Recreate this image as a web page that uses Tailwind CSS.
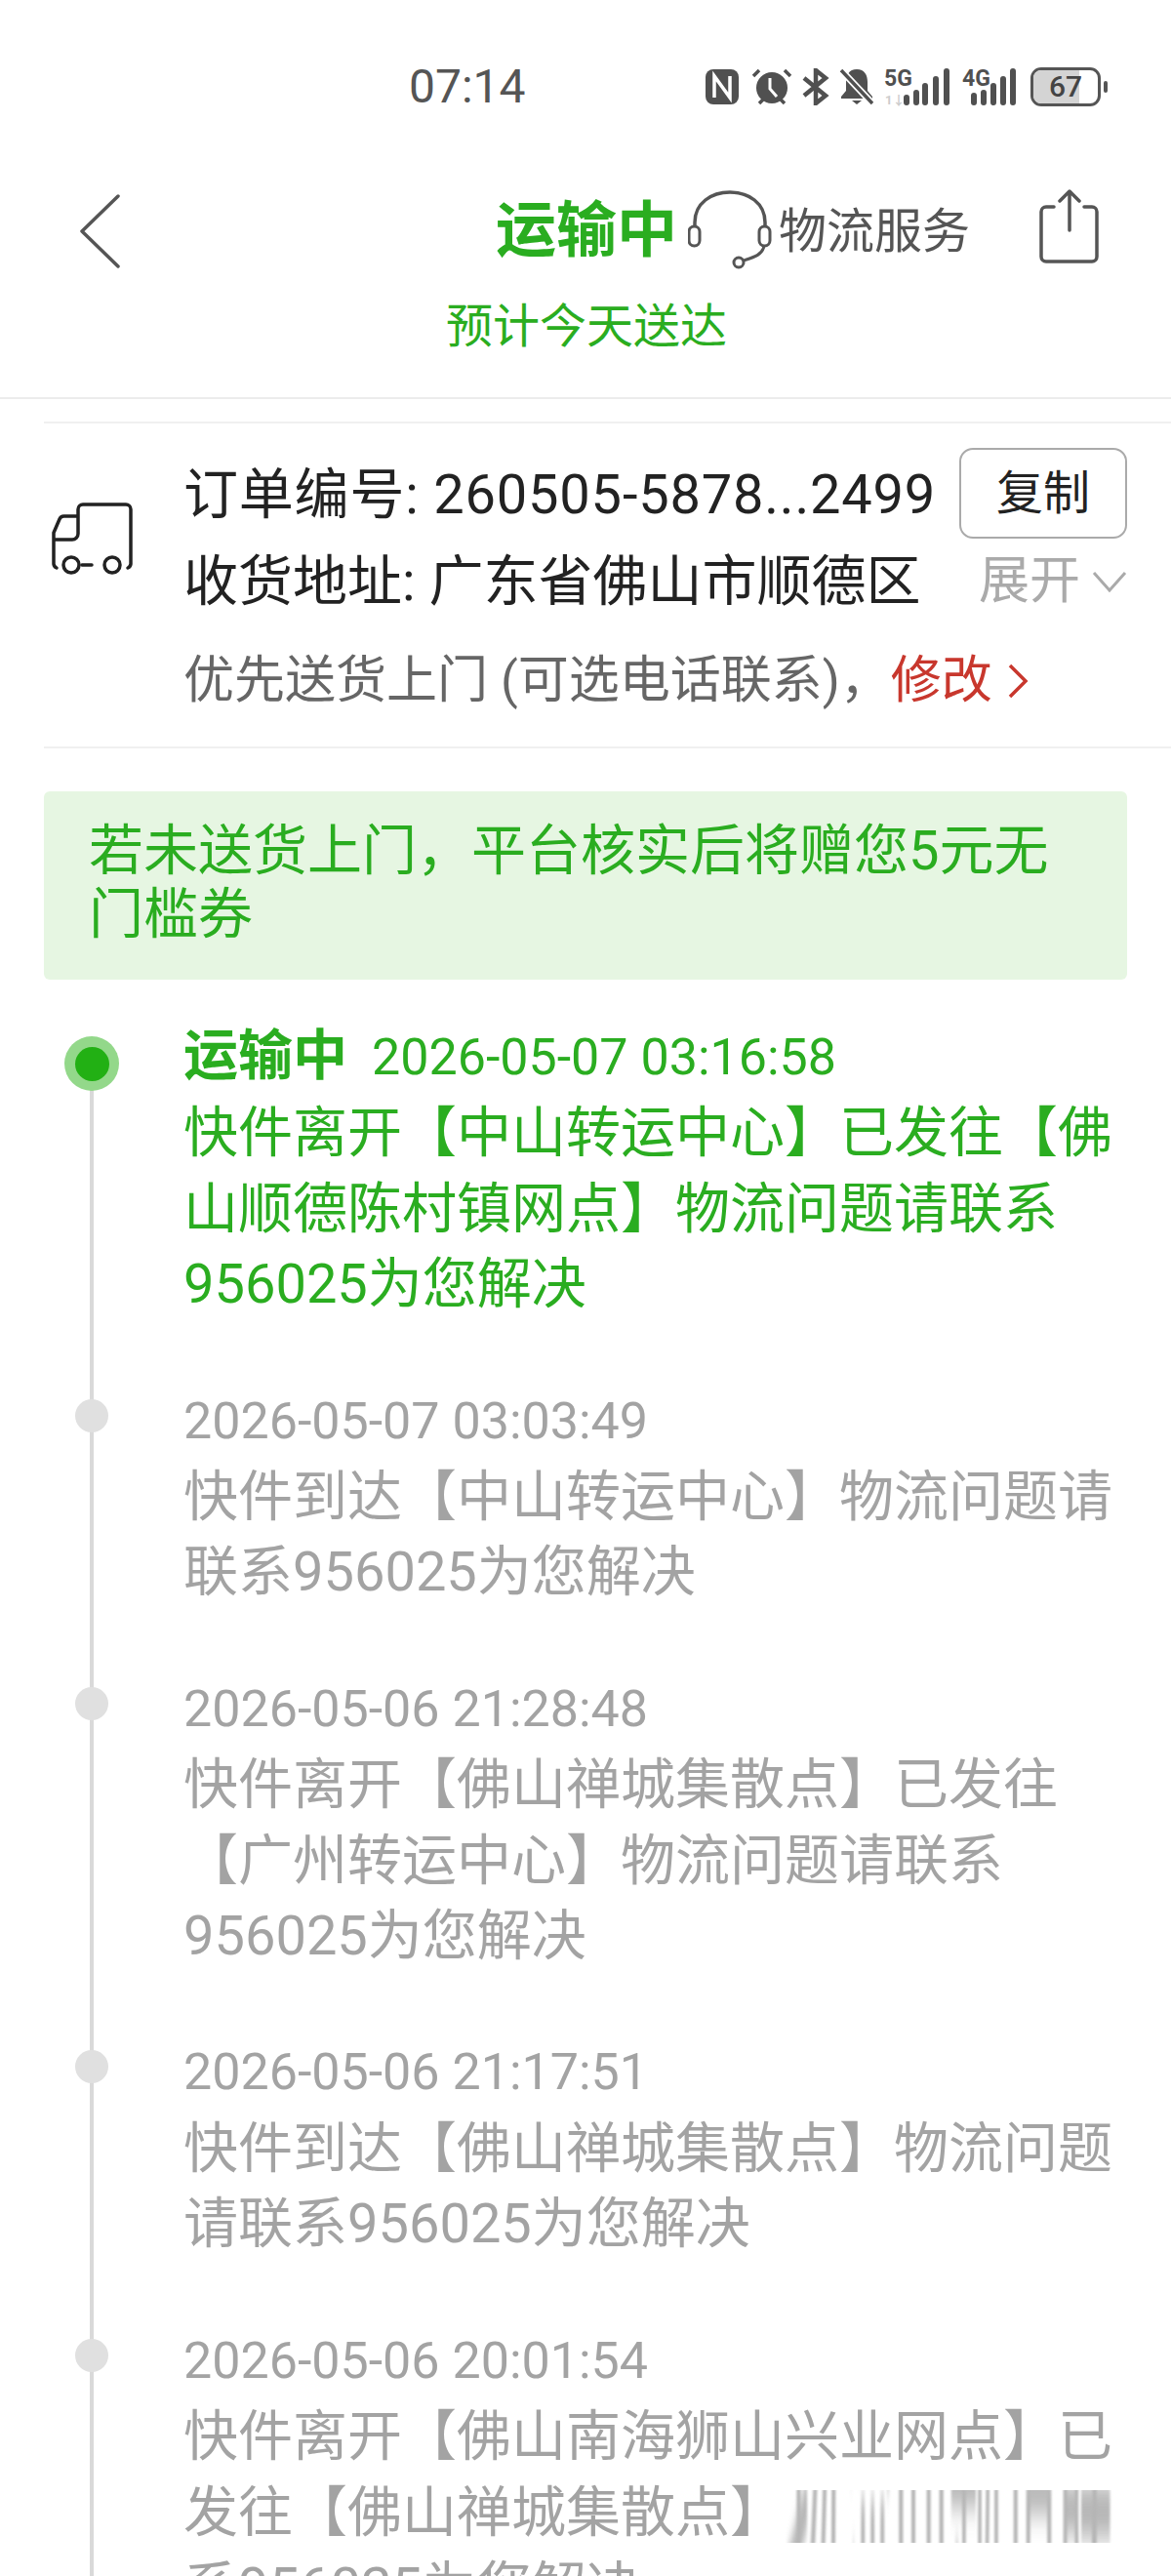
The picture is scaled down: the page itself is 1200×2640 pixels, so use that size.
<!DOCTYPE html>
<html lang="zh-CN">
<head>
  <meta charset="UTF-8" />
  <meta name="viewport" content="width=device-width, initial-scale=1.0" />
  <title>运输中</title>
  <script src="https://cdn.jsdelivr.net/npm/@tailwindcss/browser@4"></script>
</head>
<body class="bg-white font-['Roboto','Noto_Sans_CJK_SC',sans-serif]">
  <div class="w-[1200px] h-[2640px] overflow-hidden">

    <!-- status bar -->
    <div class="h-[178px] flex items-center text-[#555]">
      <span class="ml-[419px] w-[304px] text-[48px] leading-none">07:14</span>
      <svg class="w-[34px] h-[36px] mr-[13px]" viewBox="0 0 34 36"><rect width="34" height="36" rx="8" fill="#505050"/><path d="M9 29V7l16 22V7" fill="none" stroke="#fff" stroke-width="3.5"/></svg>
      <svg class="w-[42px] h-[40px] mr-[10px]" viewBox="0 0 42 40"><circle cx="21" cy="21" r="16" fill="#505050"/><path d="M19 11v11l7 8" fill="none" stroke="#fff" stroke-width="3"/><path d="M2 9l6-6M40 9l-6-6M8 37l4-4M34 37l-4-4" stroke="#505050" stroke-width="3.5"/></svg>
      <svg class="w-[28px] h-[38px] mr-[11px]" viewBox="0 0 28 38"><path d="M2 10l22 18-10 8V2l10 8L2 28" fill="none" stroke="#505050" stroke-width="4.5"/></svg>
      <svg class="w-[34px] h-[38px] mr-[11px]" viewBox="0 0 34 38"><path d="M17 1c8 0 11 6 11 13v9l5 6v2H1v-2l5-6v-9C6 7 9 1 17 1z" fill="#505050"/><path d="M12 33h10l-5 4z" fill="#505050"/><path d="M1 2l32 34" stroke="#fff" stroke-width="7"/><path d="M1 2l32 34" stroke="#505050" stroke-width="3.5"/></svg>
      <svg class="w-[68px] h-[40px] mr-[12px]" viewBox="0 0 68 40"><text x="0" y="19" font-size="23" font-weight="700" fill="#505050">5G</text><text x="1" y="38" font-size="13" font-weight="700" fill="#ccc">1↓</text><path d="M23 36v-5M33 36v-10M42 36V19M53 36V12M64 36V4" stroke="#505050" stroke-width="6" stroke-linecap="round"/></svg>
      <svg class="w-[56px] h-[40px] mr-[14px]" viewBox="0 0 56 40"><text x="0" y="19" font-size="23" font-weight="700" fill="#505050">4G</text><path d="M12 36v-7M22 36V26M32 36V19M42 36V12M52 36V4" stroke="#505050" stroke-width="6" stroke-linecap="round"/></svg>
      <div class="relative w-[72px] h-[40px] rounded-[11px] border-[3px] border-[#555] overflow-hidden flex items-center justify-center">
        <div class="absolute left-0 top-0 bottom-0 w-[47px] bg-[#d4d4d4]"></div>
        <span class="relative text-[30px] leading-none font-medium text-[#444]">67</span>
      </div>
      <div class="w-[4px] h-[12px] ml-[3px] rounded-full bg-[#555]"></div>
    </div>

    <!-- nav -->
    <div class="h-[118px] flex items-center">
      <svg class="ml-[80px] w-[44px] h-[78px]" viewBox="0 0 44 78"><path d="M41 3L4 39l37 36" fill="none" stroke="#555" stroke-width="3.5" stroke-linecap="round" stroke-linejoin="round"/></svg>
      <span class="ml-[384px] w-[198px] text-[62px] leading-none font-bold text-[#2aad20] whitespace-nowrap">运输中</span>
      <svg class="w-[92px] h-[84px] -ml-[1px] -mt-[2px]" viewBox="0 0 92 84"><path d="M7 38V34C7 14 24 3 43 3s36 11 36 31v4" fill="none" stroke="#555" stroke-width="3.5"/><rect x="1" y="38" width="11" height="20" rx="5.5" fill="none" stroke="#555" stroke-width="3"/><rect x="73" y="38" width="11" height="20" rx="5.5" fill="none" stroke="#555" stroke-width="3"/><path d="M78 58C76 68 66 70 57 73" fill="none" stroke="#555" stroke-width="3"/><circle cx="52" cy="75" r="5" fill="none" stroke="#555" stroke-width="3"/></svg>
      <span class="ml-[1px] text-[49px] leading-none text-[#555] whitespace-nowrap">物流服务</span>
      <svg class="ml-[71px] w-[62px] h-[78px] -mt-[10px]" viewBox="0 0 62 78"><path d="M15 19H7a5 5 0 0 0-5 5v46a5 5 0 0 0 5 5h47a5 5 0 0 0 5-5V24a5 5 0 0 0-5-5h-8M31 43V3M21 13L31 3l10 10" fill="none" stroke="#555" stroke-width="3.5" stroke-linecap="round" stroke-linejoin="round"/></svg>
    </div>
    <div class="h-[78px] pl-[457px] flex items-center text-[48px] leading-none text-[#2aad20]">预计今天送达</div>

    <div class="mt-[33px] h-[2px] bg-[#ececec]"></div>

    <!-- order info -->
    <div class="mt-[23px] ml-[45px] w-[1155px] h-[335px] border-y-2 border-[#f0f0f0] flex">
      <svg class="ml-[7px] mt-[80px] w-[84px] h-[78px] shrink-0" viewBox="0 0 84 78"><path d="M28 26V8a5 5 0 0 1 5-5h44a5 5 0 0 1 5 5v56a5 5 0 0 1-3 4M28 15H14a5 5 0 0 0-5 3L3 32v32a5 5 0 0 0 3 4M3 39h19a6 6 0 0 0 6-6V15M32 65h10" fill="none" stroke="#222" stroke-width="3.5" stroke-linecap="round" stroke-linejoin="round"/><circle cx="21" cy="65" r="8" fill="none" stroke="#222" stroke-width="3.5"/><circle cx="63" cy="65" r="8" fill="none" stroke="#222" stroke-width="3.5"/></svg>
      <div class="ml-[52px] w-[967px]">
        <div class="mt-[25px] h-[93px] flex items-center justify-between">
          <span class="mt-[3px] text-[56px] leading-none text-[#222] whitespace-nowrap tracking-[0.8px]">订单编号: 260505-5878...2499</span>
          <div class="w-[172px] h-[93px] rounded-[14px] border-2 border-[#aaa] flex items-center justify-center text-[48px] leading-none text-[#222]">复制</div>
        </div>
        <div class="mt-[4px] h-[80px] flex items-center justify-between">
          <span class="text-[56px] leading-none text-[#222] whitespace-nowrap">收货地址: 广东省佛山市顺德区</span>
          <div class="flex items-center">
            <span class="text-[52px] leading-none text-[#aaa]">展开</span>
            <svg class="ml-[12px] w-[36px] h-[24px]" viewBox="0 0 36 24"><path d="M2 3l16 18L34 3" fill="none" stroke="#aaa" stroke-width="3"/></svg>
          </div>
        </div>
        <div class="mt-[22px] h-[80px] flex items-center text-[52px] leading-none text-[#666] whitespace-nowrap">
          <span>优先送货上门 (可选电话联系)，</span>
          <span class="text-[#c8372d]">修改</span>
          <svg class="ml-[14px] w-[24px] h-[36px]" viewBox="0 0 24 36"><path d="M4 2l16 16L4 34" fill="none" stroke="#c8372d" stroke-width="3.5"/></svg>
        </div>
      </div>
    </div>

    <!-- notice -->
    <div class="mt-[44px] mx-[45px] h-[193px] rounded-[6px] bg-[#e6f6e2] pl-[46px] pt-[29px] text-[56px] leading-[65px] text-[#2aad20] whitespace-nowrap">
      若未送货上门，平台核实后将赠您5元无<br />门槛券
    </div>

    <!-- timeline -->
    <div class="relative mt-[40px] ml-[45px] text-[56px] leading-[77.4px] whitespace-nowrap">
      <div class="absolute left-[47px] top-[70px] bottom-0 w-[4px] bg-[#d9d9d9]"></div>

      <div class="flex pb-[63px] text-[#2aad20]">
        <div class="relative w-[143px] shrink-0 pl-[21px] pt-[18px]">
          <div class="w-[56px] h-[56px] rounded-full bg-[#93d88a] flex items-center justify-center">
            <div class="w-[35px] h-[35px] rounded-full bg-[#22b014]"></div>
          </div>
        </div>
        <div>
          <div><span class="font-bold">运输中</span><span class="ml-[25px] text-[52px]">2026-05-07 03:16:58</span></div>
          <div class="relative top-[1px]">快件离开【中山转运中心】已发往【佛<br />山顺德陈村镇网点】物流问题请联系<br />956025为您解决</div>
        </div>
      </div>

      <div class="flex pb-[63px] text-[#a3a3a3]">
        <div class="relative w-[143px] shrink-0 pl-[32px] pt-[16px]">
          <div class="w-[34px] h-[34px] rounded-full bg-[#e0e0e0]"></div>
        </div>
        <div>
          <div class="text-[52px]">2026-05-07 03:03:49</div>
          <div class="relative top-[1px]">快件到达【中山转运中心】物流问题请<br />联系956025为您解决</div>
        </div>
      </div>

      <div class="flex pb-[63px] text-[#a3a3a3]">
        <div class="relative w-[143px] shrink-0 pl-[32px] pt-[16px]">
          <div class="w-[34px] h-[34px] rounded-full bg-[#e0e0e0]"></div>
        </div>
        <div>
          <div class="text-[52px]">2026-05-06 21:28:48</div>
          <div class="relative top-[1px]">快件离开【佛山禅城集散点】已发往<br />【广州转运中心】物流问题请联系<br />956025为您解决</div>
        </div>
      </div>

      <div class="flex pb-[63px] text-[#a3a3a3]">
        <div class="relative w-[143px] shrink-0 pl-[32px] pt-[16px]">
          <div class="w-[34px] h-[34px] rounded-full bg-[#e0e0e0]"></div>
        </div>
        <div>
          <div class="text-[52px]">2026-05-06 21:17:51</div>
          <div class="relative top-[1px]">快件到达【佛山禅城集散点】物流问题<br />请联系956025为您解决</div>
        </div>
      </div>

      <div class="flex pb-[63px] text-[#a3a3a3]">
        <div class="relative w-[143px] shrink-0 pl-[32px] pt-[16px]">
          <div class="w-[34px] h-[34px] rounded-full bg-[#e0e0e0]"></div>
        </div>
        <div>
          <div class="text-[52px]">2026-05-06 20:01:54</div>
          <div class="relative top-[1px]">快件离开【佛山南海狮山兴业网点】已<br />发往【佛山禅城集散点】<span class="inline-block h-[54px] leading-[54px] align-middle overflow-hidden"><span class="inline-block origin-center scale-y-[14] blur-[1px] opacity-80">物流问题请联</span></span><br />系956025为您解决</div>
        </div>
      </div>
    </div>
  </div>
</body>
</html>
